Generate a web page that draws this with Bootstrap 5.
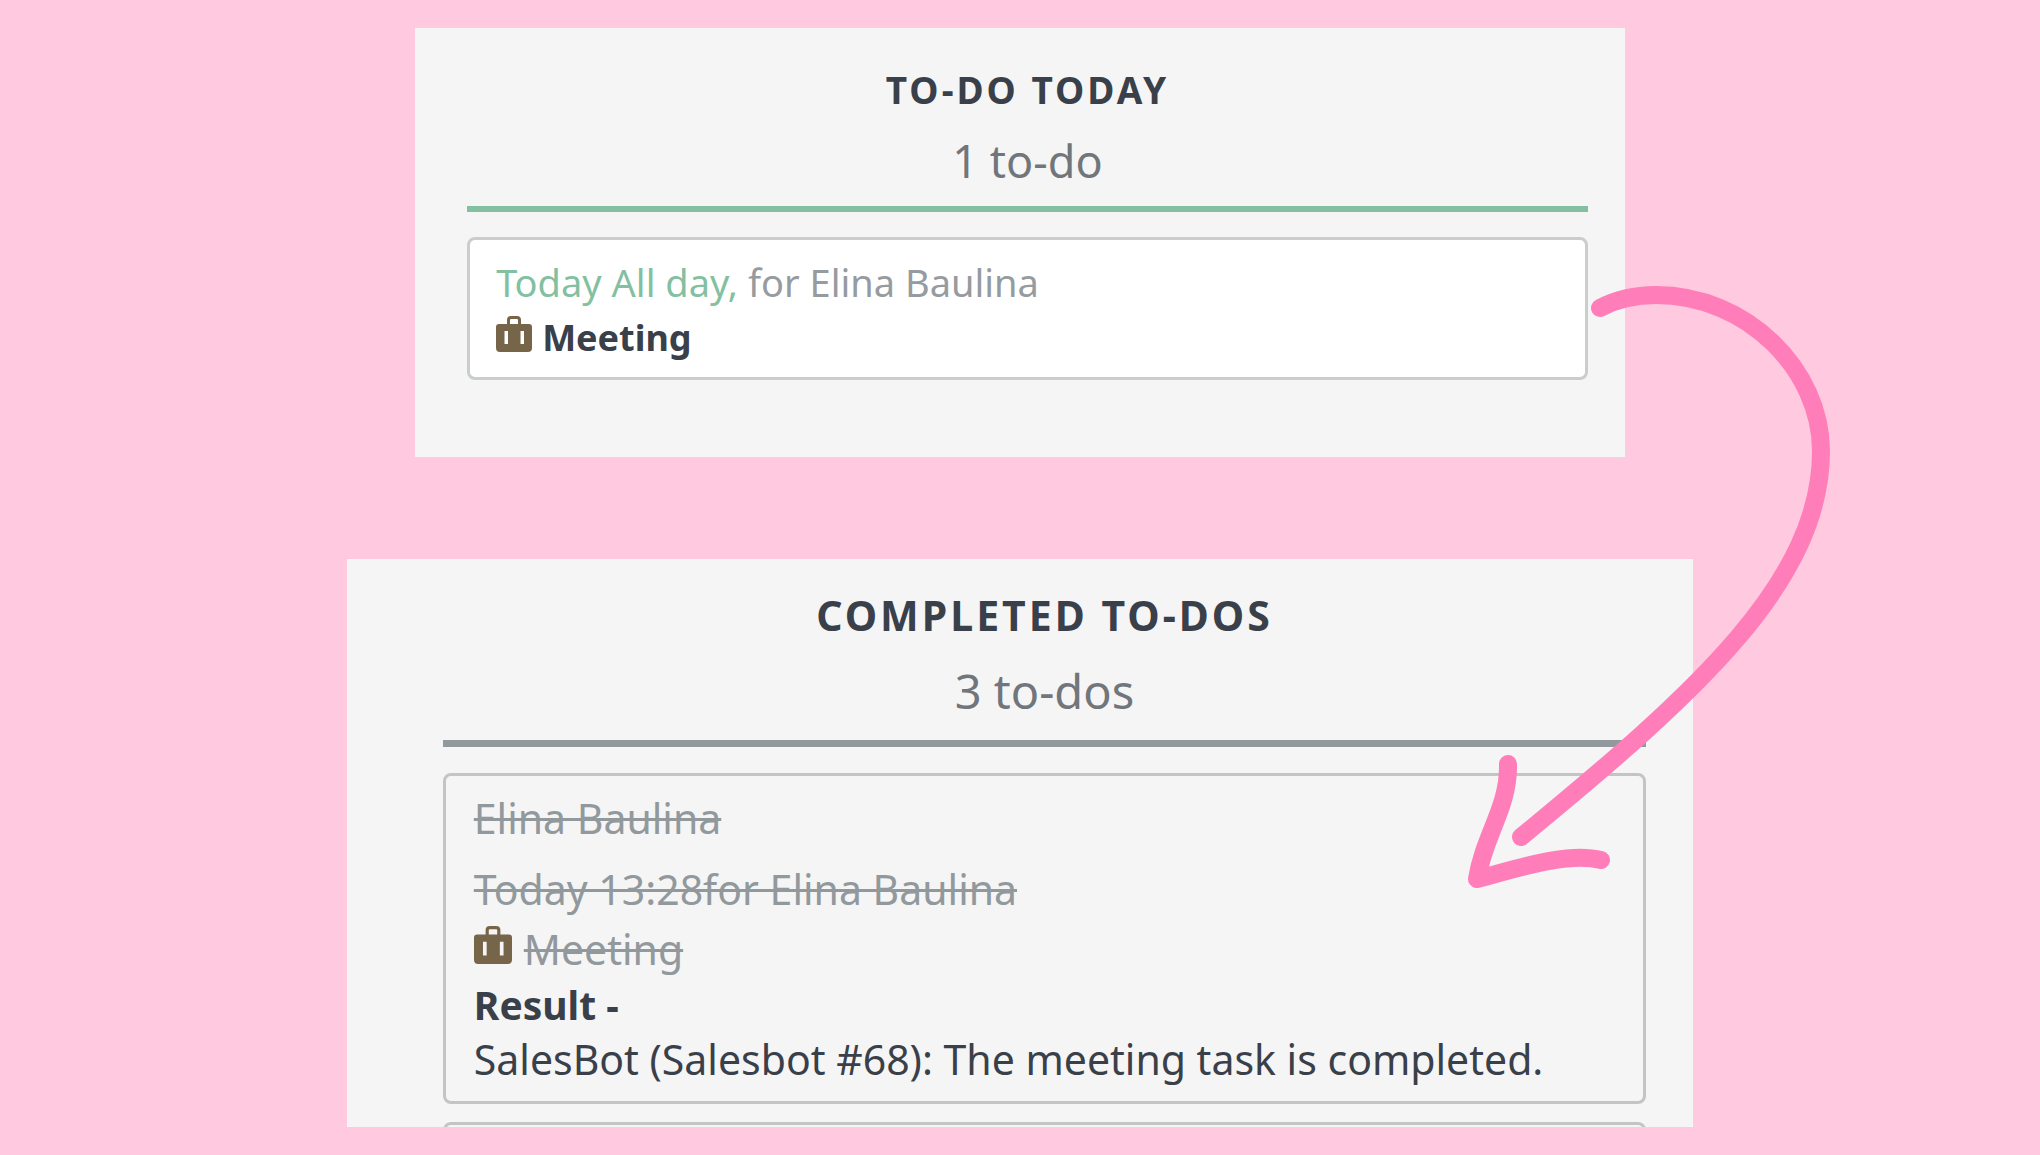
<!DOCTYPE html>
<html lang="en">
<head>
<meta charset="utf-8">
<meta name="viewport" content="width=device-width, initial-scale=1">
<title>To-dos</title>
<link rel="stylesheet" href="https://cdn.jsdelivr.net/npm/bootstrap@5.3.0/dist/css/bootstrap.min.css">
<style>
  body { background: #ffcae0; color: #3a4049; font-family: "Noto Sans", "Open Sans", sans-serif; }
  .board { min-height: 100vh; padding: 28px 0; gap: 102px; }
  .panel { background: #f5f5f5; }
  .panel-today { width: 59.3%; padding: 34px 37px 77px 52px; }
  .panel-done { width: 66%; padding: 28px 47px 0 96px; }
  .panel-title { font-size: 37px; line-height: 56px; letter-spacing: 3px; margin: 0 0 11px; }
  .panel-count { font-size: 45px; line-height: 64px; color: #70767b; margin: 0 0 13px; }
  .panel-done .panel-title { font-size: 41px; margin-bottom: 16px; }
  .panel-done .panel-count { font-size: 47px; margin-bottom: 17px; }
  .rule { height: 6px; background: #83bfa1; margin-bottom: 25px; }
  .panel-done .rule { height: 7px; background: #92999d; margin-bottom: 26px; }
  .task { border: 3px solid #c9cecd; border-radius: 8px; }
  .task-today { background: #fff; padding: 14px 26px 11px; font-size: 38px; line-height: 56px; color: #969b9f; }
  .task-today strong { font-size: 36px; }
  .task-done { border-color: #c3c5c4; padding: 15px 28px 14px; font-size: 41px; line-height: 55px; }
  .result { font-size: 39px; }
  .when { color: #83bfa1; }
  .ink { color: #3a4049; }
  .old { color: #92999d; text-decoration: line-through; text-decoration-thickness: 3px; }
  .by { margin-bottom: 16px; }
  .due { margin-bottom: 5px; }
  .subject { gap: 10px; }
  .task-done .subject { gap: 12px; }
  .case { width: 36px; height: 36px; margin-bottom: 8px; }
  .task-done .case { width: 38px; height: 38px; margin-bottom: 10px; }
  .peek { height: 5px; margin-top: 18px; }
  .peek .task { height: 24px; }
  .arrow { pointer-events: none; }
</style>
<script src="https://cdn.jsdelivr.net/npm/bootstrap@5.3.0/dist/js/bootstrap.bundle.min.js"></script>
</head>
<body>
<svg class="d-none" xmlns="http://www.w3.org/2000/svg">
  <symbol id="briefcase" viewBox="0 0 36 36">
    <path d="M12.500 9V4Q12.500 1.500 15 1.500H21Q23.500 1.500 23.500 4V9" fill="none" stroke="#77654a" stroke-width="3"/>
    <path fill="#77654a" fill-rule="evenodd" d="M3 8H33Q36 8 36 11V32Q36 36 32 36H4Q0 36 0 32V11Q0 8 3 8ZM8.500 15V28H12V15ZM24.500 15V28H28V15Z"/>
  </symbol>
</svg>
<main class="board position-relative d-flex flex-column align-items-center">
  <section class="panel panel-today">
    <h2 class="panel-title fw-bold text-center text-uppercase">To-do today</h2>
    <p class="panel-count text-center">1 to-do</p>
    <div class="rule"></div>
    <article class="task task-today">
      <div><span class="when">Today All day,</span> for Elina Baulina</div>
      <div class="subject d-flex align-items-center"><svg class="case" aria-hidden="true"><use href="#briefcase"/></svg><strong class="ink">Meeting</strong></div>
    </article>
  </section>
  <section class="panel panel-done">
    <h2 class="panel-title fw-bold text-center text-uppercase">Completed to-dos</h2>
    <p class="panel-count text-center">3 to-dos</p>
    <div class="rule"></div>
    <article class="task task-done">
      <div class="by"><span class="old">Elina Baulina</span></div>
      <div class="due"><span class="old">Today 13:28for Elina Baulina</span></div>
      <div class="subject d-flex align-items-center"><svg class="case" aria-hidden="true"><use href="#briefcase"/></svg><span class="old">Meeting</span></div>
      <div class="result fw-bold">Result -</div>
      <div>SalesBot (Salesbot #68): The meeting task is completed.</div>
    </article>
    <div class="peek overflow-hidden"><div class="task task-done"></div></div>
  </section>
  <svg class="arrow position-absolute top-0 start-0 w-100 h-100" viewBox="0 0 2040 1155" fill="none" stroke="#ff7eb9" stroke-width="18" stroke-linecap="round" stroke-linejoin="round" aria-hidden="true">
    <path d="M1600 308C1617 299 1636 295 1656 295C1747 295 1821 370 1821 451C1821 580 1700 690 1521 837"/>
    <path d="M1508 764C1509 808 1484 835 1477 879C1510 871 1565 851 1601 860"/>
  </svg>
</main>
</body>
</html>
